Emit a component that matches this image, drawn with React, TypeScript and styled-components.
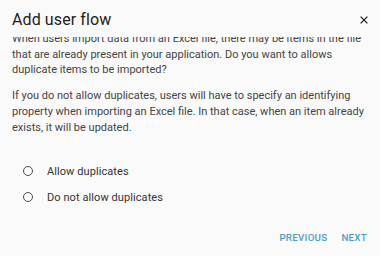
import React, { useLayoutEffect, useRef } from "react";
import styled, { createGlobalStyle } from "styled-components";

const Global = createGlobalStyle`
  html, body { margin: 0; padding: 0; background: #fafafa; }
  body { font-family: Roboto, "Liberation Sans", Arial, sans-serif; }
`;

const Dialog = styled.div`
  width: 380px;
  height: 256px;
  background: #fafafa;
  display: flex;
  flex-direction: column;
  box-sizing: border-box;
  overflow: hidden;
`;

const Header = styled.div`
  height: 37px;
  flex: 0 0 37px;
  display: flex;
  align-items: center;
  justify-content: space-between;
  padding: 2px 12px 0 12px;
  box-sizing: border-box;
`;

const Title = styled.h2`
  margin: 0;
  font-size: 16px;
  font-weight: 400;
  color: #212121;
  letter-spacing: 0.1px;
`;

const CloseButton = styled.button`
  border: 0;
  background: transparent;
  padding: 0;
  width: 16px;
  height: 16px;
  display: flex;
  align-items: center;
  justify-content: center;
  margin-right: -4px;
  cursor: pointer;
  color: #222;
`;

const Content = styled.div`
  flex: 0 0 auto;
  height: 100px;
  overflow: hidden;
  padding: 0 12px;
`;

const Paragraph = styled.p`
  margin: 0 0 10.3px 0;
  font-size: 11px;
  line-height: 15.7px;
  letter-spacing: 0;
  color: #444;
`;

const RadioGroup = styled.div`
  display: flex;
  flex-direction: column;
  gap: 6px;
  padding: 24px 0 0 23px;
`;

const RadioRow = styled.label`
  display: flex;
  align-items: center;
  height: 20px;
  gap: 14px;
  font-size: 11px;
  letter-spacing: 0.08px;
  color: #333;
  cursor: pointer;
`;

const RadioCircle = styled.span`
  width: 10px;
  height: 10px;
  box-sizing: border-box;
  border: 1.5px solid #4d4d4d;
  border-radius: 50%;
  display: inline-block;
`;

const Actions = styled.div`
  margin-top: auto;
  display: flex;
  justify-content: flex-end;
  align-items: center;
  gap: 14px;
  padding: 0 13px 11px 0;
  height: 16px;
`;

const TextButton = styled.button`
  border: 0;
  background: transparent;
  padding: 0;
  font-family: Roboto, "Liberation Sans", Arial, sans-serif;
  font-size: 9.7px;
  font-weight: 500;
  letter-spacing: 0.3px;
  color: #45a0d2;
  text-transform: uppercase;
  cursor: pointer;
`;

export default function App() {
  const ref = useRef<HTMLDivElement>(null);
  useLayoutEffect(() => {
    if (ref.current) ref.current.scrollTop = 6;
  }, []);
  return (
    <>
      <Global />
      <Dialog>
        <Header>
          <Title>Add user flow</Title>
          <CloseButton aria-label="close">
            <svg width="8" height="8" viewBox="0 0 8 8">
              <path d="M0.6 0.6 L7.4 7.4 M7.4 0.6 L0.6 7.4" stroke="#222" strokeWidth="1.3" fill="none" />
            </svg>
          </CloseButton>
        </Header>
        <Content ref={ref}>
          <Paragraph>
            When users import data from an Excel file, there may be items in the file that are already present in your
            application. Do you want to allows duplicate items to be imported?
          </Paragraph>
          <Paragraph>
            If you do not allow duplicates, users will have to specify an identifying property when importing an Excel
            file. In that case, when an item already exists, it will be updated.
          </Paragraph>
        </Content>
        <RadioGroup>
          <RadioRow>
            <RadioCircle />
            Allow duplicates
          </RadioRow>
          <RadioRow>
            <RadioCircle />
            Do not allow duplicates
          </RadioRow>
        </RadioGroup>
        <Actions>
          <TextButton>Previous</TextButton>
          <TextButton>Next</TextButton>
        </Actions>
      </Dialog>
    </>
  );
}
